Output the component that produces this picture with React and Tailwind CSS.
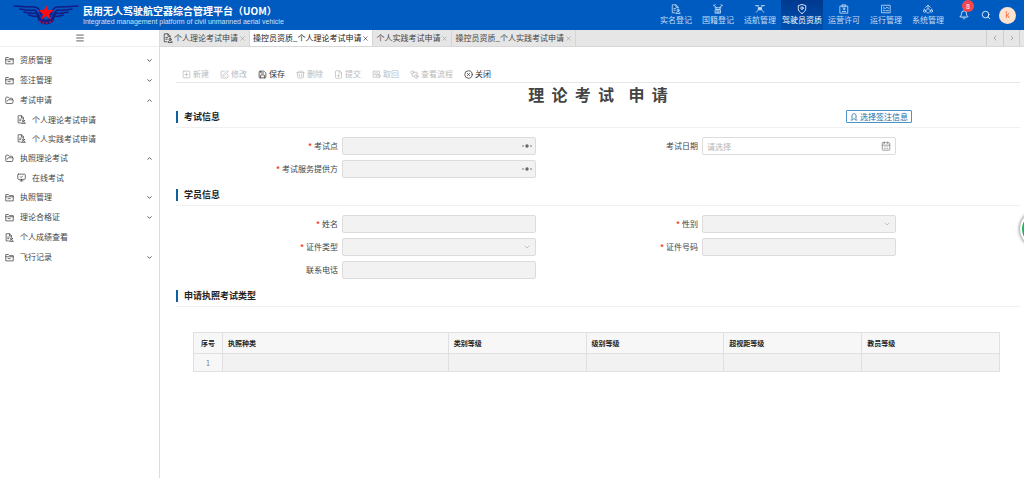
import {
  Bell,
  CalendarDays,
  ChevronDown,
  ChevronLeft,
  ChevronRight,
  ChevronUp,
  CircleX,
  FileDown,
  FolderOpen,
  Menu,
  MonitorCheck,
  Save,
  Search,
  SquarePen,
  SquarePlus,
  X,
} from "lucide-react";

const nav = [
  { label: "实名登记", icon: FileUser },
  { label: "国籍登记", icon: AircraftIcon },
  { label: "适航管理", icon: DroneIcon },
  { label: "驾驶员资质", icon: ShieldPin, active: true },
  { label: "运营许可", icon: PermitIcon },
  { label: "运行管理", icon: BoardIcon },
  { label: "系统管理", icon: HubIcon },
];

const menu = [
  { label: "资质管理", icon: FolderMinus },
  { label: "签注管理", icon: FolderMinus },
  {
    label: "考试申请",
    icon: FolderOpen,
    children: [
      { label: "个人理论考试申请", icon: FileUser },
      { label: "个人实践考试申请", icon: FileUser },
    ],
  },
  {
    label: "执照理论考试",
    icon: FolderOpen,
    children: [{ label: "在线考试", icon: MonitorCheck }],
  },
  { label: "执照管理", icon: FolderMinus },
  { label: "理论合格证", icon: FolderMinus },
  { label: "个人成绩查看", icon: FileUser, leaf: true },
  { label: "飞行记录", icon: FolderMinus },
];

const tabs = [
  { label: "个人理论考试申请", icon: true },
  { label: "操控员资质_个人理论考试申请", active: true },
  { label: "个人实践考试申请" },
  { label: "操控员资质_个人实践考试申请" },
];

const tools = [
  { label: "新建", icon: SquarePlus },
  { label: "修改", icon: SquarePen },
  { label: "保存", icon: Save, enabled: true },
  { label: "删除", icon: BinIcon },
  { label: "提交", icon: FileDown },
  { label: "取回", icon: RecallIcon },
  { label: "查看流程", icon: FlowIcon },
  { label: "关闭", icon: CircleX, enabled: true },
];

function Svg({ children, ...props }) {
  return (
    <svg
      viewBox="0 0 24 24"
      fill="none"
      stroke="currentColor"
      strokeWidth="2"
      strokeLinecap="round"
      strokeLinejoin="round"
      {...props}
    >
      {children}
    </svg>
  );
}

function AircraftIcon(props) {
  return (
    <Svg {...props}>
      <path d="M2 3l6 5M22 3l-6 5M1 5l4-4M23 5l-4-4M5 9h14M7 9v4h10V9" />
      <path d="M6 14h12v8H6zM9 17h6M9 20h6" />
    </Svg>
  );
}

function DroneIcon(props) {
  return (
    <Svg {...props}>
      <path d="M1 4h8M15 4h8M5 4l5 5h4l5-5M9 9l-1 5-5 6M15 9l1 5 5 6" />
      <path d="M9 9h6v5H9z" fill="currentColor" />
    </Svg>
  );
}

function ShieldPin(props) {
  return (
    <Svg {...props}>
      <path d="M12 23C6 19 3 16 3 11V4l9-3 9 3v7c0 5-3 8-9 12z" />
      <circle cx="12" cy="10" r="3" />
    </Svg>
  );
}

function PermitIcon(props) {
  return (
    <Svg {...props}>
      <path d="M3 5h18v17H3zM8 2h8v5H8z" />
      <circle cx="12" cy="12" r="2" />
      <path d="M8 18h8" />
    </Svg>
  );
}

function BoardIcon(props) {
  return (
    <Svg {...props}>
      <path d="M2 3h20v18H2zM6 8l4 3 4-3 4 2M6 16h3M12 16h6M6 12v0" />
    </Svg>
  );
}

function HubIcon(props) {
  return (
    <Svg {...props}>
      <path d="M6 8l6-5 6 5M12 3v8M12 11l-6 5M12 11l6 5M3 12v3M21 12v3" />
      <circle cx="4" cy="17" r="3" />
      <circle cx="20" cy="17" r="3" />
      <path d="M9 20l3 2 3-2" />
    </Svg>
  );
}

function FolderMinus(props) {
  return (
    <Svg {...props}>
      <path d="M2 20V4h7l3 3h10v13zM2 10h20M8 15h6" />
    </Svg>
  );
}

function FileUser(props) {
  return (
    <Svg {...props}>
      <path d="M9 21H3V2h9l5 5v3M12 2v6h5M7 11h4M7 15h3" />
      <circle cx="17" cy="15" r="2.5" />
      <path d="M12 22c0-5 10-5 10 0z" />
    </Svg>
  );
}

function BinIcon(props) {
  return (
    <Svg {...props}>
      <path d="M4 6c0-4 16-4 16 0v13c0 4-16 4-16 0zM2 7h20M9 11v7M15 11v7" />
    </Svg>
  );
}

function RecallIcon(props) {
  return (
    <Svg {...props}>
      <path d="M11 19H3V3h17v6M7 8h8M7 12h4" />
      <circle cx="17" cy="16" r="5" />
      <path d="M17 13v3h3" />
    </Svg>
  );
}

function FlowIcon(props) {
  return (
    <Svg {...props}>
      <circle cx="6" cy="6" r="4" />
      <path d="M10 6h9v4M6 10v7h4" />
      <circle cx="17" cy="17" r="5" />
      <path d="M17 15v4" />
    </Svg>
  );
}

function Logo() {
  return (
    <svg viewBox="0 0 66 22" className="h-[22px] w-[66px] shrink-0" aria-hidden="true">
      <g fill="none" stroke="#141c86" strokeWidth="1.7" strokeLinecap="round" strokeLinejoin="round">
        <path d="M1 2q12 1 21 1 4 1 5 5l3 6" />
        <path d="M7 5q9 2 15 1l4 5" />
        <path d="M11 8q7 2 12 1l4 5" />
        <path d="M16 11q5 2 8 1l4 4" />
        <path d="M65 2q-12 1-21 1-4 1-5 5l-3 6" />
        <path d="M59 5q-9 2-15 1l-4 5" />
        <path d="M55 8q-7 2-12 1l-4 5" />
        <path d="M50 11q-5 2-8 1l-4 4" />
      </g>
      <path d="M24 13q9 5 18 0l-2 5q-7 5-14 0z" fill="#141c86" />
      <path d="M33 1l2 5h6l-5 4 2 6-5-4-5 4 2-6-5-4h6z" fill="#ff0a14" />
      <path d="M26 17q7 4 14 0" fill="none" stroke="#c41b3c" strokeWidth="1.4" strokeDasharray="2 1.5" />
    </svg>
  );
}

function MenuItem({ item }) {
  const Icon = item.icon;
  const Arrow = item.children ? ChevronUp : ChevronDown;
  return (
    <li>
      <a href="#" className="flex h-5 items-center gap-[6px] pl-[5px] pr-[6px]">
        <Icon className="size-[9px]" strokeWidth={2} />
        <span className="flex-1">{item.label}</span>
        {!item.leaf && <Arrow className="size-[7px]" strokeWidth={3} />}
      </a>
      {item.children && (
        <ul>
          {item.children.map((child) => (
            <li key={child.label}>
              <a href="#" className="flex h-[19px] items-center gap-[6px] pl-[17px]">
                <child.icon className="size-[9px]" strokeWidth={2} />
                {child.label}
              </a>
            </li>
          ))}
        </ul>
      )}
    </li>
  );
}

function Section({ title, action, children }) {
  return (
    <section>
      <div className="flex h-[22px] items-center justify-between border-b border-[#f0f0f0] pr-[108px]">
        <h2 className="border-l-2 border-[#0f609b] pl-[6px] text-[9px] leading-3 font-bold text-[#222]">
          {title}
        </h2>
        {action}
      </div>
      {children}
    </section>
  );
}

function Fields({ children }) {
  return (
    <div className="mr-[124px] grid grid-cols-2 gap-y-[5px] pt-[9px] pb-[6px]">
      {children}
    </div>
  );
}

const box =
  "block h-[18px] w-full appearance-none rounded-[2px] border border-[#dcdcdc] px-1 text-[8px] placeholder:text-[#b5b5b5]";

function Field({ id, label, required, type = "text", placeholder }) {
  const disabled = type !== "date";
  return (
    <div className="flex items-center gap-1">
      <label htmlFor={id} className="w-[45%] text-right">
        {required && <span className="mr-[2px] font-bold text-[#f5421a]">*</span>}
        {label}
      </label>
      <div className="relative flex-1">
        {type === "select" ? (
          <select id={id} disabled className={`${box} bg-[#f2f2f2]`} />
        ) : (
          <input
            id={id}
            disabled={disabled}
            placeholder={placeholder}
            className={`${box} ${disabled ? "bg-[#f2f2f2]" : "bg-white"}`}
          />
        )}
        {type === "select" && (
          <ChevronDown className="absolute top-[5px] right-[5px] size-[8px] text-[#aaa]" />
        )}
        {type === "date" && (
          <CalendarDays className="absolute top-1 right-[5px] size-[10px] text-[#888]" />
        )}
        {type === "lookup" && (
          <svg viewBox="0 0 10 4" className="absolute top-[7px] right-1 h-1 w-[10px] fill-[#666]">
            <circle cx="1" cy="2" r="0.8" />
            <circle cx="5" cy="2" r="1.7" />
            <circle cx="9" cy="2" r="0.8" />
          </svg>
        )}
      </div>
    </div>
  );
}

export default function App() {
  return (
    <div className="flex min-h-screen flex-col overflow-hidden bg-white font-['Noto_Sans_CJK_SC',sans-serif] text-[8px] leading-3 text-[#444]">
      <header className="flex h-[30px] items-stretch bg-[#005bc0] text-white">
        <div className="flex flex-1 items-center gap-1 pl-[13px]">
          <Logo />
          <div className="whitespace-nowrap">
            <h1 className="text-[10px] leading-3 font-bold">民用无人驾驶航空器综合管理平台（UOM）</h1>
            <p className="font-['Liberation_Sans',sans-serif] text-[7px] leading-[9px] text-[#cfe2f7]">
              Integrated management platform of civil unmanned aerial vehicle
            </p>
          </div>
        </div>
        <nav className="flex">
          {nav.map(({ label, icon: Icon, active }) => (
            <a
              key={label}
              href="#"
              className={`flex w-[42px] flex-col items-center justify-center whitespace-nowrap ${
                active ? "bg-linear-to-b from-[#00398f] to-[#0050b0] text-white" : "text-[#c5dcf5]"
              }`}
            >
              <Icon className="size-[10px]" strokeWidth={2} />
              {label}
            </a>
          ))}
        </nav>
        <div className="flex items-center pr-2 pl-[10px]">
          <button className="relative mr-3" aria-label="bell">
            <Bell className="size-[10px]" />
            <span className="absolute -top-[10px] left-[3px] flex size-3 items-center justify-center rounded-full bg-[#f5484d] text-[7px]">
              8
            </span>
          </button>
          <button className="mr-2" aria-label="search">
            <Search className="size-[10px]" />
          </button>
          <span className="flex size-[17px] items-center justify-center rounded-full bg-[#fde3cf] text-[#f56a00]">
            k
          </span>
        </div>
      </header>

      <div className="flex flex-1">
        <aside className="w-40 shrink-0 border-r border-[#dcdcdc]">
          <button className="flex h-[17px] w-full items-center justify-center border-b border-[#eee]" aria-label="menu">
            <Menu className="size-[10px]" />
          </button>
          <ul className="pt-[3px]">
            {menu.map((item) => (
              <MenuItem key={item.label} item={item} />
            ))}
          </ul>
        </aside>

        <div className="min-w-0 flex-1">
          <div className="flex h-[17px] border-b border-[#d8d8d8] bg-[#e6e6e6]">
            {tabs.map((tab) => (
              <div
                key={tab.label}
                className={`flex items-center gap-px border-r border-[#d5d5d5] px-[3px] whitespace-nowrap ${
                  tab.active ? "bg-white text-[#222]" : ""
                }`}
              >
                {tab.icon && <FileUser className="size-[10px]" />}
                <a href="#">{tab.label}</a>
                <button aria-label="close">
                  <X className={`size-[7px] ${tab.active ? "" : "text-[#999]"}`} />
                </button>
              </div>
            ))}
            <div className="ml-auto flex text-[#888]">
              <button className="flex w-[17px] items-center justify-center border-l border-[#cfcfcf]" aria-label="previous">
                <ChevronLeft className="size-[8px]" />
              </button>
              <button className="flex w-[16px] items-center justify-center border-l border-[#cfcfcf]" aria-label="next">
                <ChevronRight className="size-[8px]" />
              </button>
              <span className="w-[5px] border-l border-[#cfcfcf]" />
            </div>
          </div>

          <main className="pr-1 pl-4">
            <div className="flex h-9 items-end gap-[11px] border-b border-[#e6e6e6] pb-[2px] pl-[6px]">
              {tools.map(({ label, icon: Icon, enabled }) => (
                <button
                  key={label}
                  disabled={!enabled}
                  className={`flex items-center gap-[2px] ${enabled ? "text-[#333]" : "text-[#bbb]"}`}
                >
                  <Icon className="size-[9px]" />
                  {label}
                </button>
              ))}
            </div>

            <h1 className="h-[23px] text-center text-[16px] leading-[23px] font-bold whitespace-pre text-[#444]">
              {"理  论  考  试    申  请"}
            </h1>

            <Section
              title="考试信息"
              action={
                <button className="flex h-[13px] items-center gap-[2px] rounded-[1px] border border-[#4a95c8] px-[3px] text-[#1a6ca8]">
                  <svg viewBox="0 0 24 24" className="size-[8px]" fill="none" stroke="currentColor" strokeWidth="2.5">
                    <path d="M6 17V8c0-8 12-8 12 0v9M2 21h6l2-5M22 21h-6l-2-5" />
                  </svg>
                  选择签注信息
                </button>
              }
            >
              <Fields>
                <Field id="site" label="考试点" required type="lookup" />
                <Field id="date" label="考试日期" type="date" placeholder="请选择" />
                <Field id="provider" label="考试服务提供方" required type="lookup" />
              </Fields>
            </Section>

            <Section title="学员信息">
              <Fields>
                <Field id="name" label="姓名" required />
                <Field id="gender" label="性别" required type="select" />
                <Field id="idType" label="证件类型" required type="select" />
                <Field id="idNo" label="证件号码" required />
                <Field id="phone" label="联系电话" />
              </Fields>
            </Section>

            <Section title="申请执照考试类型">
              <div className="mt-[25px] mr-5 ml-[17px]">
                <table className="w-full table-fixed border-collapse text-left text-[7px] [&_td]:border [&_td]:border-[#e0e0e0] [&_th]:border [&_th]:border-[#e0e0e0] [&_th]:px-[5px]">
                  <thead>
                    <tr className="h-[21px] bg-[#f7f7f7] text-[#222]">
                      <th className="w-[29px] text-center">序号</th>
                      <th className="w-[28%]">执照种类</th>
                      <th>类别等级</th>
                      <th>级别等级</th>
                      <th>超视距等级</th>
                      <th>教员等级</th>
                    </tr>
                  </thead>
                  <tbody>
                    <tr className="h-[18px] bg-[#f2f2f2]">
                      <td className="bg-[#f7f7f7] text-center text-[8px] text-[#888]">1</td>
                      <td />
                      <td />
                      <td />
                      <td />
                      <td />
                    </tr>
                  </tbody>
                </table>
              </div>
            </Section>
          </main>
        </div>
      </div>

      <div className="fixed top-[211px] -right-8 size-9 rounded-full border-2 border-white bg-[#22b35e] shadow-[0_0_3px_1px_#999]" />
    </div>
  );
}
